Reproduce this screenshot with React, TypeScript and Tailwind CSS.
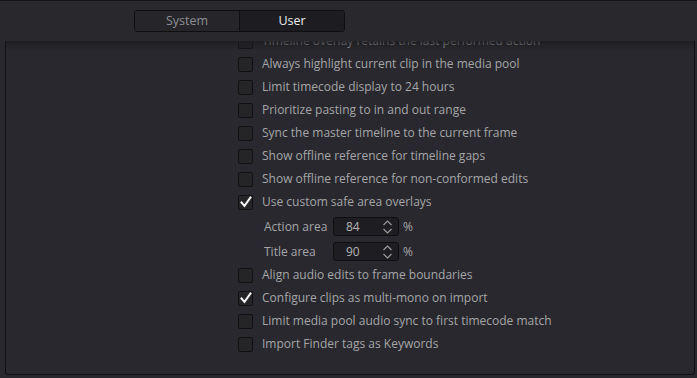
import type { ReactNode } from 'react';

type Row =
  | { kind: 'check'; label: string; checked?: boolean }
  | { kind: 'number'; label: string; value: string; h: string };

const rows: Row[] = [
  { kind: 'check', label: 'Timeline overlay retains the last performed action' },
  { kind: 'check', label: 'Always highlight current clip in the media pool' },
  { kind: 'check', label: 'Limit timecode display to 24 hours' },
  { kind: 'check', label: 'Prioritize pasting to in and out range' },
  { kind: 'check', label: 'Sync the master timeline to the current frame' },
  { kind: 'check', label: 'Show offline reference for timeline gaps' },
  { kind: 'check', label: 'Show offline reference for non-conformed edits' },
  { kind: 'check', label: 'Use custom safe area overlays', checked: true },
  { kind: 'number', label: 'Action area', value: '84', h: 'h-[26px]' },
  { kind: 'number', label: 'Title area', value: '90', h: 'h-[24px]' },
  { kind: 'check', label: 'Align audio edits to frame boundaries' },
  { kind: 'check', label: 'Configure clips as multi-mono on import', checked: true },
  { kind: 'check', label: 'Limit media pool audio sync to first timecode match' },
  { kind: 'check', label: 'Import Finder tags as Keywords' },
];

// 勾选框
function CheckBox({ checked }: { checked?: boolean }) {
  return (
    <span className="w-[15px] h-[15px] rounded-[2px] border border-[#111113] bg-[#252528] flex items-center justify-center">
      {checked && (
        <svg width="12" height="12" viewBox="0 0 12 12">
          <path d="M1.5 6.5 L4.5 9.8 L10.5 1.5" fill="none" stroke="#f2f2f2" strokeWidth="2" strokeLinecap="square" />
        </svg>
      )}
    </span>
  );
}

// 上下箭头
function Spinner() {
  return (
    <svg width="11" height="16" viewBox="0 0 11 16">
      <path d="M1.5 6 L5.5 2 L9.5 6" fill="none" stroke="#9a9a9c" strokeWidth="1.2" />
      <path d="M1.5 10 L5.5 14 L9.5 10" fill="none" stroke="#9a9a9c" strokeWidth="1.2" />
    </svg>
  );
}

function RowLine({ children, h = 'h-[23px]' }: { children: ReactNode; h?: string }) {
  return <div className={`${h} flex items-center`}>{children}</div>;
}

export default function App() {
  return (
    <div
      className="w-[697px] h-[378px] bg-[#28282e] overflow-hidden flex flex-col text-[12px]"
      style={{ fontFamily: '"Open Sans", "Noto Sans", sans-serif' }}
    >
      {/* 顶部切换 */}
      <div className="h-[41px] shrink-0 border-t border-[#141416] bg-[#28282d] flex items-start pt-[9px] pl-[134px] relative z-10 text-[12.5px]">
        <div className="flex h-[22px] w-[211px] rounded-[3px] border border-[#0f0f11] overflow-hidden">
          <div className="w-[105px] bg-[#26262a] border-r border-[#0f0f11] flex items-center justify-center text-[#8e8e92]">
            System
          </div>
          <div className="flex-1 bg-[#1d1d21] flex items-center justify-center text-[#ececec]">
            User
          </div>
        </div>
      </div>

      {/* 设置面板 */}
      <div className="flex-1 pl-[5px] pr-[2px] pb-[3px] flex">
        <div className="flex-1 relative border-l border-r border-b border-[#111113] rounded-b-[3px] overflow-hidden">
          <div className="absolute inset-x-0 top-0 h-[10px] bg-gradient-to-b from-[#1c1c20]/80 to-transparent z-10" />
          <div className="-mt-[11.5px] pl-[232px] flex flex-col text-[#a6a6a8]">
            {rows.map((r) =>
              r.kind === 'check' ? (
                <RowLine key={r.label}>
                  <CheckBox checked={r.checked} />
                  <span className="ml-[9px] whitespace-nowrap">{r.label}</span>
                </RowLine>
              ) : (
                <RowLine key={r.label} h={r.h}>
                  <span className="ml-[26px] w-[69px] whitespace-nowrap">{r.label}</span>
                  <div className="w-[66px] h-[19px] rounded-[3px] border border-[#0f0f11] bg-[#1e1e22] flex items-center pl-[12px] pr-[5px]">
                    <span className="flex-1 text-[#b4b4b6]">{r.value}</span>
                    <Spinner />
                  </div>
                  <span className="ml-[4px]">%</span>
                </RowLine>
              )
            )}
          </div>
        </div>
      </div>
    </div>
  );
}
